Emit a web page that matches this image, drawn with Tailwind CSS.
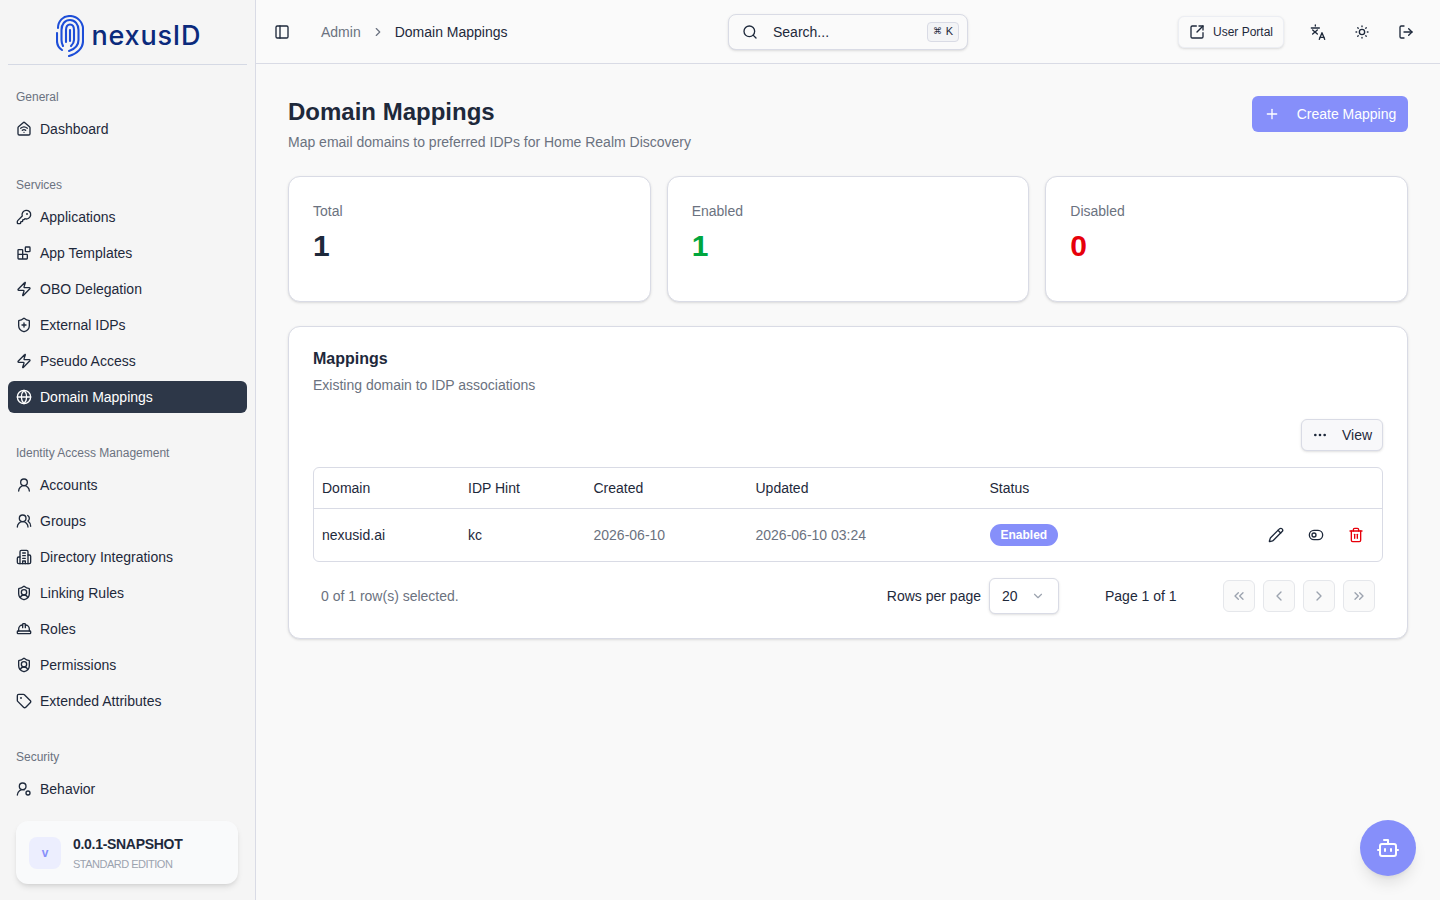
<!DOCTYPE html>
<html lang="en">
<head>
  <meta charset="UTF-8">
  <meta name="viewport" content="width=device-width, initial-scale=1.0">
  <title>Domain Mappings</title>
  <script src="https://cdn.jsdelivr.net/npm/@tailwindcss/browser@4"></script>
</head>
<body class="h-[900px] overflow-hidden bg-[#f9f9f9] text-[#1e293b] font-['Liberation_Sans',sans-serif]">
  <div class="flex h-[900px]">
    <!-- sidebar -->
    <aside class="w-[256px] shrink-0 flex flex-col border-r border-[#d9dbe5] bg-[#f5f5f5]">
      <div class="mx-2 h-[65px] shrink-0 flex items-center justify-center gap-[8px] border-b border-[#d5d9e4] pt-[7px]">
        <svg class="w-[28px] h-[42px]" viewBox="0 0 28 42" fill="none" stroke="#1d4ed8" stroke-width="2.1" stroke-linecap="round">
          <path d="M2 13C2 6 7 1 14 1C21 1 27 7 27 14V26C27 33 21 39 13 41"/>
          <path d="M1 18V26C1 30 3 33 6 35"/>
          <path d="M7 31C6 29 5.500 27 5.500 25V15C5.500 9 9 5 14 5C19 5 22.500 9.500 22.500 15V25C22.500 30 19 34 13 36"/>
          <path d="M10 27V15C10 11.500 11.500 9.500 14 9.500C16.500 9.500 18 11.500 18 15V25C18 27 17 29 15 31"/>
          <path d="M14 15V26"/>
        </svg>
        <span class="w-[108px] font-[Inter,sans-serif] text-[27px] leading-none font-medium tracking-[0.8px] text-[#0b2a7c] whitespace-nowrap">nexusID</span>
      </div>
      <nav class="flex-1 overflow-hidden pt-2">
        <div class="p-2">
          <div class="h-8 flex items-center px-2 text-xs text-[#6b7280]">General</div>
          <a class="h-8 flex items-center gap-2 px-2 text-sm rounded-md">
            <svg class="w-4 h-4" viewBox="0 0 24 24" fill="none" stroke="currentColor" stroke-width="2" stroke-linecap="round" stroke-linejoin="round"><path d="M9.500 13.866a4 4 0 0 1 5 .01"/><path d="M12 17h.01"/><path d="M3 10a2 2 0 0 1 .709-1.528l7-5.999a2 2 0 0 1 2.582 0l7 5.999A2 2 0 0 1 21 10v9a2 2 0 0 1-2 2H5a2 2 0 0 1-2-2z"/><path d="M7 10.754a8 8 0 0 1 10 0"/></svg>
            Dashboard
          </a>
        </div>
        <div class="p-2 mt-2">
          <div class="h-8 flex items-center px-2 text-xs text-[#6b7280]">Services</div>
          <div class="flex flex-col gap-1">
            <a class="h-8 flex items-center gap-2 px-2 text-sm rounded-md">
              <svg class="w-4 h-4" viewBox="0 0 24 24" fill="none" stroke="currentColor" stroke-width="2" stroke-linecap="round" stroke-linejoin="round"><path d="M2.586 17.414A2 2 0 0 0 2 18.828V21a1 1 0 0 0 1 1h3a1 1 0 0 0 1-1v-1a1 1 0 0 1 1-1h1a1 1 0 0 0 1-1v-1a1 1 0 0 1 1-1h.172a2 2 0 0 0 1.414-.586l.814-.814a6.500 6.500 0 1 0-4-4z"/><circle cx="16.500" cy="7.500" r=".5" fill="currentColor"/></svg>
              Applications
            </a>
            <a class="h-8 flex items-center gap-2 px-2 text-sm rounded-md">
              <svg class="w-4 h-4" viewBox="0 0 24 24" fill="none" stroke="currentColor" stroke-width="2" stroke-linecap="round" stroke-linejoin="round"><rect x="14" y="3" width="7" height="7" rx="1"/><path d="M10 21V8a1 1 0 0 0-1-1H4a1 1 0 0 0-1 1v12a1 1 0 0 0 1 1h12a1 1 0 0 0 1-1v-5a1 1 0 0 0-1-1H3"/></svg>
              App Templates
            </a>
            <a class="h-8 flex items-center gap-2 px-2 text-sm rounded-md">
              <svg class="w-4 h-4" viewBox="0 0 24 24" fill="none" stroke="currentColor" stroke-width="2" stroke-linecap="round" stroke-linejoin="round"><path d="M4 14a1 1 0 0 1-.78-1.630l9.900-10.200a.5.5 0 0 1 .86.46l-1.920 6.020A1 1 0 0 0 13 10h7a1 1 0 0 1 .78 1.630l-9.900 10.200a.5.5 0 0 1-.86-.46l1.920-6.020A1 1 0 0 0 11 14z"/></svg>
              OBO Delegation
            </a>
            <a class="h-8 flex items-center gap-2 px-2 text-sm rounded-md">
              <svg class="w-4 h-4" viewBox="0 0 24 24" fill="none" stroke="currentColor" stroke-width="2" stroke-linecap="round" stroke-linejoin="round"><path d="M20 13c0 5-3.500 7.500-7.660 8.950a1 1 0 0 1-.67-.01C7.500 20.500 4 18 4 13V6a1 1 0 0 1 1-1c2 0 4.500-1.200 6.240-2.720a1.170 1.170 0 0 1 1.520 0C14.510 3.810 17 5 19 5a1 1 0 0 1 1 1z"/><path d="M9 12h6"/><path d="M12 9v6"/></svg>
              External IDPs
            </a>
            <a class="h-8 flex items-center gap-2 px-2 text-sm rounded-md">
              <svg class="w-4 h-4" viewBox="0 0 24 24" fill="none" stroke="currentColor" stroke-width="2" stroke-linecap="round" stroke-linejoin="round"><path d="M4 14a1 1 0 0 1-.78-1.630l9.900-10.200a.5.5 0 0 1 .86.46l-1.920 6.020A1 1 0 0 0 13 10h7a1 1 0 0 1 .78 1.630l-9.900 10.200a.5.5 0 0 1-.86-.46l1.920-6.020A1 1 0 0 0 11 14z"/></svg>
              Pseudo Access
            </a>
            <a class="h-8 flex items-center gap-2 px-2 text-sm font-medium rounded-md bg-[#2d3748] text-white">
              <svg class="w-4 h-4" viewBox="0 0 24 24" fill="none" stroke="currentColor" stroke-width="2" stroke-linecap="round" stroke-linejoin="round"><circle cx="12" cy="12" r="10"/><path d="M12 2a14.500 14.500 0 0 0 0 20 14.500 14.500 0 0 0 0-20"/><path d="M2 12h20"/></svg>
              Domain Mappings
            </a>
          </div>
        </div>
        <div class="p-2 mt-2">
          <div class="h-8 flex items-center px-2 text-xs text-[#6b7280]">Identity Access Management</div>
          <div class="flex flex-col gap-1">
            <a class="h-8 flex items-center gap-2 px-2 text-sm rounded-md">
              <svg class="w-4 h-4" viewBox="0 0 24 24" fill="none" stroke="currentColor" stroke-width="2" stroke-linecap="round" stroke-linejoin="round"><circle cx="12" cy="8" r="5"/><path d="M20 21a8 8 0 0 0-16 0"/></svg>
              Accounts
            </a>
            <a class="h-8 flex items-center gap-2 px-2 text-sm rounded-md">
              <svg class="w-4 h-4" viewBox="0 0 24 24" fill="none" stroke="currentColor" stroke-width="2" stroke-linecap="round" stroke-linejoin="round"><path d="M18 21a8 8 0 0 0-16 0"/><circle cx="10" cy="8" r="5"/><path d="M22 20c0-3.370-2-6.500-4-8a5 5 0 0 0-.45-8.300"/></svg>
              Groups
            </a>
            <a class="h-8 flex items-center gap-2 px-2 text-sm rounded-md">
              <svg class="w-4 h-4" viewBox="0 0 24 24" fill="none" stroke="currentColor" stroke-width="2" stroke-linecap="round" stroke-linejoin="round"><path d="M6 22V4a2 2 0 0 1 2-2h8a2 2 0 0 1 2 2v18Z"/><path d="M6 12H4a2 2 0 0 0-2 2v6a2 2 0 0 0 2 2h2"/><path d="M18 9h2a2 2 0 0 1 2 2v9a2 2 0 0 1-2 2h-2"/><path d="M10 6h4"/><path d="M10 10h4"/><path d="M10 14h4"/><path d="M10 22v-4h4v4"/></svg>
              Directory Integrations
            </a>
            <a class="h-8 flex items-center gap-2 px-2 text-sm rounded-md">
              <svg class="w-4 h-4" viewBox="0 0 24 24" fill="none" stroke="currentColor" stroke-width="2" stroke-linecap="round" stroke-linejoin="round"><path d="M20 13c0 5-3.500 7.500-7.660 8.950a1 1 0 0 1-.67-.01C7.500 20.500 4 18 4 13V6a1 1 0 0 1 1-1c2 0 4.500-1.200 6.240-2.720a1.170 1.170 0 0 1 1.520 0C14.510 3.810 17 5 19 5a1 1 0 0 1 1 1z"/><path d="M6.376 18.910a6 6 0 0 1 11.249.003"/><circle cx="12" cy="11" r="4"/></svg>
              Linking Rules
            </a>
            <a class="h-8 flex items-center gap-2 px-2 text-sm rounded-md">
              <svg class="w-4 h-4" viewBox="0 0 24 24" fill="none" stroke="currentColor" stroke-width="2" stroke-linecap="round" stroke-linejoin="round"><path d="M10 10V5a1 1 0 0 1 1-1h2a1 1 0 0 1 1 1v5"/><path d="M14 6a6 6 0 0 1 6 6v3"/><path d="M4 15v-3a6 6 0 0 1 6-6"/><rect x="2" y="15" width="20" height="4" rx="1"/></svg>
              Roles
            </a>
            <a class="h-8 flex items-center gap-2 px-2 text-sm rounded-md">
              <svg class="w-4 h-4" viewBox="0 0 24 24" fill="none" stroke="currentColor" stroke-width="2" stroke-linecap="round" stroke-linejoin="round"><path d="M20 13c0 5-3.500 7.500-7.660 8.950a1 1 0 0 1-.67-.01C7.500 20.500 4 18 4 13V6a1 1 0 0 1 1-1c2 0 4.500-1.200 6.240-2.720a1.170 1.170 0 0 1 1.520 0C14.510 3.810 17 5 19 5a1 1 0 0 1 1 1z"/><path d="M6.376 18.910a6 6 0 0 1 11.249.003"/><circle cx="12" cy="11" r="4"/></svg>
              Permissions
            </a>
            <a class="h-8 flex items-center gap-2 px-2 text-sm rounded-md">
              <svg class="w-4 h-4" viewBox="0 0 24 24" fill="none" stroke="currentColor" stroke-width="2" stroke-linecap="round" stroke-linejoin="round"><path d="M12.586 2.586A2 2 0 0 0 11.172 2H4a2 2 0 0 0-2 2v7.172a2 2 0 0 0 .586 1.414l8.704 8.704a2.426 2.426 0 0 0 3.420 0l6.580-6.580a2.426 2.426 0 0 0 0-3.420z"/><circle cx="7.500" cy="7.500" r=".5" fill="currentColor"/></svg>
              Extended Attributes
            </a>
          </div>
        </div>
        <div class="p-2 mt-2">
          <div class="h-8 flex items-center px-2 text-xs text-[#6b7280]">Security</div>
          <a class="h-8 flex items-center gap-2 px-2 text-sm rounded-md">
            <svg class="w-4 h-4" viewBox="0 0 24 24" fill="none" stroke="currentColor" stroke-width="2" stroke-linecap="round" stroke-linejoin="round"><path d="M2 21a8 8 0 0 1 10.434-7.620"/><circle cx="10" cy="8" r="5"/><circle cx="18" cy="18" r="3"/></svg>
            Behavior
          </a>
        </div>
      </nav>
      <div class="pl-4 pr-[17px] pb-4 shrink-0">
        <div class="h-[63px] flex items-center gap-3 pl-[13px] pr-3 rounded-xl bg-[#f9fafb] shadow-md">
          <div class="w-8 h-8 flex items-center justify-center rounded-lg bg-[#eceefe] text-[#868ffa] text-xs font-bold">v</div>
          <div>
            <div class="text-sm leading-5 font-bold tracking-[-0.3px]">0.0.1-SNAPSHOT</div>
            <div class="mt-[2px] text-[11px] leading-4 text-[#9ca3af] tracking-[-0.5px]">STANDARD EDITION</div>
          </div>
        </div>
      </div>
    </aside>

    <div class="flex-1 flex flex-col min-w-0">
      <!-- top bar -->
      <header class="h-[64px] shrink-0 grid grid-cols-[1fr_240px_1fr] items-center border-b border-[#d9dbe5] bg-[#fafafa]">
        <div class="flex items-center pl-[10px] text-sm">
          <button class="w-8 h-8 flex items-center justify-center">
            <svg class="w-4 h-4" viewBox="0 0 24 24" fill="none" stroke="currentColor" stroke-width="2" stroke-linecap="round" stroke-linejoin="round"><rect x="3" y="3" width="18" height="18" rx="2"/><path d="M9 3v18"/></svg>
          </button>
          <span class="ml-[23px] text-[#6b7280]">Admin</span>
          <svg class="w-[14px] h-[14px] ml-[10px] text-[#6b7280]" viewBox="0 0 24 24" fill="none" stroke="currentColor" stroke-width="2" stroke-linecap="round" stroke-linejoin="round"><path d="m9 18 6-6-6-6"/></svg>
          <span class="ml-[10px]">Domain Mappings</span>
        </div>
        <div class="h-9 flex items-center pl-[13px] pr-[8px] rounded-lg border border-[#d9dbe5] bg-[#fafafa] shadow-sm text-sm">
          <svg class="w-4 h-4" viewBox="0 0 24 24" fill="none" stroke="currentColor" stroke-width="2" stroke-linecap="round" stroke-linejoin="round"><path d="m21 21-4.340-4.340"/><circle cx="11" cy="11" r="8"/></svg>
          <span class="ml-[15px] flex-1">Search...</span>
          <kbd class="h-5 px-[5px] flex items-center gap-[4px] rounded border border-[#d9dbe5] bg-[#f3f4f6] text-[11px] font-['Liberation_Sans',sans-serif]"><span class="text-[9px]">⌘</span>K</kbd>
        </div>
        <div class="flex items-center justify-end pr-[18px]">
          <button class="h-8 w-[106px] flex items-center justify-center gap-[8px] rounded-md border border-[#eceef3] bg-[#fafafa] shadow-sm text-xs">
            <svg class="w-4 h-4" viewBox="0 0 24 24" fill="none" stroke="currentColor" stroke-width="2" stroke-linecap="round" stroke-linejoin="round"><path d="M21 13v6a2 2 0 0 1-2 2H5a2 2 0 0 1-2-2V5a2 2 0 0 1 2-2h6"/><path d="m21 3-9 9"/><path d="M15 3h6v6"/></svg>
            User Portal
          </button>
          <button class="w-8 h-8 ml-[18px] flex items-center justify-center">
            <svg class="w-4 h-4" viewBox="0 0 24 24" fill="none" stroke="currentColor" stroke-width="2" stroke-linecap="round" stroke-linejoin="round"><path d="M8 1.500v1.500"/><path d="M2 6h12"/><path d="m4 9 7 6"/><path d="m11 9-7 6"/><path d="m22 23-4-10-4 10"/><path d="M15 20h6"/></svg>
          </button>
          <button class="w-8 h-8 ml-3 flex items-center justify-center">
            <svg class="w-4 h-4" viewBox="0 0 24 24" fill="none" stroke="currentColor" stroke-width="2" stroke-linecap="round" stroke-linejoin="round"><circle cx="12" cy="12" r="4"/><path d="M12 3v1"/><path d="M12 20v1"/><path d="M3 12h1"/><path d="M20 12h1"/><path d="m18.364 5.636-.707.707"/><path d="m6.343 17.657-.707.707"/><path d="m5.636 5.636.707.707"/><path d="m17.657 17.657.707.707"/></svg>
          </button>
          <button class="w-8 h-8 ml-3 flex items-center justify-center">
            <svg class="w-4 h-4" viewBox="0 0 24 24" fill="none" stroke="currentColor" stroke-width="2" stroke-linecap="round" stroke-linejoin="round"><path d="m16 17 5-5-5-5"/><path d="M21 12H9"/><path d="M9 21H5a2 2 0 0 1-2-2V5a2 2 0 0 1 2-2h4"/></svg>
          </button>
        </div>
      </header>

      <!-- page -->
      <main class="flex-1 px-8 pt-8">
        <div class="flex items-start justify-between">
          <div>
            <h1 class="text-2xl leading-8 font-bold">Domain Mappings</h1>
            <p class="mt-[4px] text-sm leading-5 text-[#6b7280]">Map email domains to preferred IDPs for Home Realm Discovery</p>
          </div>
          <button class="h-9 w-[156px] flex items-center justify-center gap-[17px] rounded-md bg-[#868ffa] text-white text-sm font-medium">
            <svg class="w-4 h-4" viewBox="0 0 24 24" fill="none" stroke="currentColor" stroke-width="2" stroke-linecap="round" stroke-linejoin="round"><path d="M5 12h14"/><path d="M12 5v14"/></svg>
            Create Mapping
          </button>
        </div>

        <div class="mt-[24px] grid grid-cols-3 gap-4">
          <div class="h-[126px] p-6 rounded-xl border border-[#d9dbe5] bg-white shadow-sm">
            <div class="text-sm leading-5 text-[#6b7280]">Total</div>
            <div class="mt-[7px] text-3xl leading-9 font-bold">1</div>
          </div>
          <div class="h-[126px] p-6 rounded-xl border border-[#d9dbe5] bg-white shadow-sm">
            <div class="text-sm leading-5 text-[#6b7280]">Enabled</div>
            <div class="mt-[7px] text-3xl leading-9 font-bold text-[#00a63e]">1</div>
          </div>
          <div class="h-[126px] p-6 rounded-xl border border-[#d9dbe5] bg-white shadow-sm">
            <div class="text-sm leading-5 text-[#6b7280]">Disabled</div>
            <div class="mt-[7px] text-3xl leading-9 font-bold text-[#e7000b]">0</div>
          </div>
        </div>

        <section class="mt-6 h-[313px] px-6 pt-5 rounded-xl border border-[#d9dbe5] bg-white shadow-sm">
          <h2 class="text-base leading-6 font-bold">Mappings</h2>
          <p class="mt-[4px] text-sm leading-5 text-[#6b7280]">Existing domain to IDP associations</p>
          <div class="mt-[24px] flex justify-end">
            <button class="h-8 w-[82px] flex items-center justify-center gap-[14px] rounded-md border border-[#d9dbe5] bg-[#f8f8fa] shadow-sm text-sm">
              <svg class="w-4 h-4" viewBox="0 0 24 24" fill="none" stroke="currentColor" stroke-width="2" stroke-linecap="round" stroke-linejoin="round"><circle cx="12" cy="12" r="1"/><circle cx="19" cy="12" r="1"/><circle cx="5" cy="12" r="1"/></svg>
              View
            </button>
          </div>
          <div class="mt-4 rounded-md border border-[#d9dbe5] overflow-hidden">
            <table class="w-full table-fixed text-sm">
              <colgroup>
                <col class="w-[146px]"><col class="w-[125.5px]"><col class="w-[162px]"><col class="w-[234px]"><col>
              </colgroup>
              <thead>
                <tr class="h-[40px]">
                  <th class="px-2 text-left font-normal">Domain</th>
                  <th class="px-2 text-left font-normal">IDP Hint</th>
                  <th class="px-2 text-left font-normal">Created</th>
                  <th class="px-2 text-left font-normal">Updated</th>
                  <th class="px-2 text-left font-normal">Status</th>
                </tr>
              </thead>
              <tbody>
                <tr class="h-[53px] border-t border-[#d9dbe5]">
                  <td class="px-2">nexusid.ai</td>
                  <td class="px-2">kc</td>
                  <td class="px-2 text-[#6b7280]">2026-06-10</td>
                  <td class="px-2 text-[#6b7280]">2026-06-10 03:24</td>
                  <td class="pl-2 pr-[10px]">
                    <div class="flex items-center justify-between">
                      <span class="h-[22px] px-[11px] flex items-center rounded-full bg-[#868ffa] text-white text-xs font-bold">Enabled</span>
                      <div class="flex gap-2">
                        <button class="w-8 h-8 flex items-center justify-center">
                          <svg class="w-4 h-4" viewBox="0 0 24 24" fill="none" stroke="currentColor" stroke-width="2" stroke-linecap="round" stroke-linejoin="round"><path d="M21.174 6.812a1 1 0 0 0-3.986-3.987L3.842 16.174a2 2 0 0 0-.5.83l-1.321 4.352a.5.5 0 0 0 .623.622l4.353-1.320a2 2 0 0 0 .83-.497z"/><path d="m15 5 4 4"/></svg>
                        </button>
                        <button class="w-8 h-8 flex items-center justify-center">
                          <svg class="w-4 h-4" viewBox="0 0 24 24" fill="none" stroke="currentColor" stroke-width="2" stroke-linecap="round" stroke-linejoin="round"><circle cx="9" cy="12" r="3"/><rect x="2" y="5" width="20" height="14" rx="7"/></svg>
                        </button>
                        <button class="w-8 h-8 flex items-center justify-center text-[#e7000b]">
                          <svg class="w-4 h-4" viewBox="0 0 24 24" fill="none" stroke="currentColor" stroke-width="2" stroke-linecap="round" stroke-linejoin="round"><path d="M10 11v6"/><path d="M14 11v6"/><path d="M19 6v14a2 2 0 0 1-2 2H7a2 2 0 0 1-2-2V6"/><path d="M3 6h18"/><path d="M8 6V4a2 2 0 0 1 2-2h4a2 2 0 0 1 2 2v2"/></svg>
                        </button>
                      </div>
                    </div>
                  </td>
                </tr>
              </tbody>
            </table>
          </div>
          <div class="mt-4 h-9 flex items-center pl-2 pr-2 text-sm">
            <div class="flex-1 text-[#6b7280]">0 of 1 row(s) selected.</div>
            <span>Rows per page</span>
            <div class="ml-2 h-9 w-[70px] flex items-center justify-between pl-[12px] pr-[13px] rounded-md border border-[#d9dbe5] bg-white shadow-sm">
              20
              <svg class="w-[14px] h-[14px] text-[#9ca3af]" viewBox="0 0 24 24" fill="none" stroke="currentColor" stroke-width="2" stroke-linecap="round" stroke-linejoin="round"><path d="m6 9 6 6 6-6"/></svg>
            </div>
            <span class="ml-[46px] w-[72px] whitespace-nowrap">Page 1 of 1</span>
            <div class="ml-[46px] flex gap-2 text-[#9ca3af]">
              <button class="w-8 h-8 flex items-center justify-center rounded-md border border-[#e5e7eb] bg-[#fafafa]">
                <svg class="w-4 h-4" viewBox="0 0 24 24" fill="none" stroke="currentColor" stroke-width="2" stroke-linecap="round" stroke-linejoin="round"><path d="m11 17-5-5 5-5"/><path d="m18 17-5-5 5-5"/></svg>
              </button>
              <button class="w-8 h-8 flex items-center justify-center rounded-md border border-[#e5e7eb] bg-[#fafafa]">
                <svg class="w-4 h-4" viewBox="0 0 24 24" fill="none" stroke="currentColor" stroke-width="2" stroke-linecap="round" stroke-linejoin="round"><path d="m15 18-6-6 6-6"/></svg>
              </button>
              <button class="w-8 h-8 flex items-center justify-center rounded-md border border-[#e5e7eb] bg-[#fafafa]">
                <svg class="w-4 h-4" viewBox="0 0 24 24" fill="none" stroke="currentColor" stroke-width="2" stroke-linecap="round" stroke-linejoin="round"><path d="m9 18 6-6-6-6"/></svg>
              </button>
              <button class="w-8 h-8 flex items-center justify-center rounded-md border border-[#e5e7eb] bg-[#fafafa]">
                <svg class="w-4 h-4" viewBox="0 0 24 24" fill="none" stroke="currentColor" stroke-width="2" stroke-linecap="round" stroke-linejoin="round"><path d="m6 17 5-5-5-5"/><path d="m13 17 5-5-5-5"/></svg>
              </button>
            </div>
          </div>
        </section>
      </main>
    </div>
  </div>

  <!-- floating assistant button -->
  <button class="fixed right-6 bottom-6 w-14 h-14 flex items-center justify-center rounded-full bg-[#868ffa] text-white shadow-lg">
    <svg class="w-6 h-6" viewBox="0 0 24 24" fill="none" stroke="currentColor" stroke-width="2" stroke-linecap="round" stroke-linejoin="round"><path d="M12 8V4H8"/><rect x="4" y="8" width="16" height="12" rx="2"/><path d="M2 14h2"/><path d="M20 14h2"/><path d="M15 13v2"/><path d="M9 13v2"/></svg>
  </button>
</body>
</html>
